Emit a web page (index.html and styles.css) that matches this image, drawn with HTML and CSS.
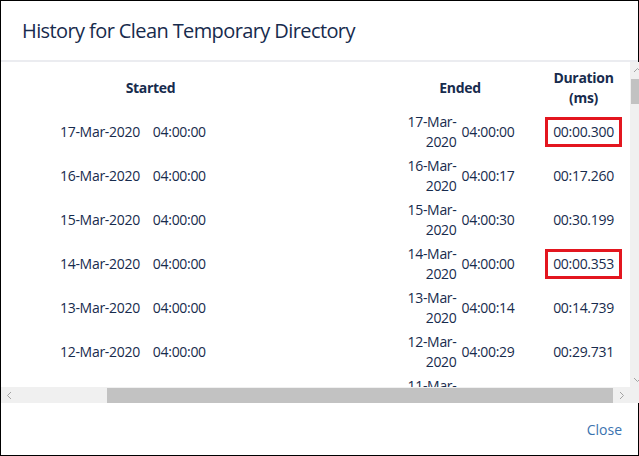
FILE: index.html
```html
<!DOCTYPE html>
<html lang="en">
<head>
  <meta charset="UTF-8" />
  <title>History for Clean Temporary Directory</title>
  <link rel="stylesheet" href="styles.css">
</head>
<body>
  <div class="dialog">
    <header class="dialog-header">
      <h2>History for Clean Temporary Directory</h2>
    </header>

    <div class="scroll-area">
      <div class="viewport">
        <div class="history">
          <div class="cell head started">Started</div>
          <div class="cell head ended">Ended</div>
          <div class="cell head duration">Duration<br>(ms)</div>

          <div class="cell started"><span>17-Mar-2020</span><span>04:00:00</span></div>
          <div class="cell ended"><span class="date">17-Mar-2020</span><span>04:00:00</span></div>
          <div class="cell duration"><span class="ms flagged">00:00.300</span></div>

          <div class="cell started"><span>16-Mar-2020</span><span>04:00:00</span></div>
          <div class="cell ended"><span class="date">16-Mar-2020</span><span>04:00:17</span></div>
          <div class="cell duration"><span class="ms">00:17.260</span></div>

          <div class="cell started"><span>15-Mar-2020</span><span>04:00:00</span></div>
          <div class="cell ended"><span class="date">15-Mar-2020</span><span>04:00:30</span></div>
          <div class="cell duration"><span class="ms">00:30.199</span></div>

          <div class="cell started"><span>14-Mar-2020</span><span>04:00:00</span></div>
          <div class="cell ended"><span class="date">14-Mar-2020</span><span>04:00:00</span></div>
          <div class="cell duration"><span class="ms flagged">00:00.353</span></div>

          <div class="cell started"><span>13-Mar-2020</span><span>04:00:00</span></div>
          <div class="cell ended"><span class="date">13-Mar-2020</span><span>04:00:14</span></div>
          <div class="cell duration"><span class="ms">00:14.739</span></div>

          <div class="cell started"><span>12-Mar-2020</span><span>04:00:00</span></div>
          <div class="cell ended"><span class="date">12-Mar-2020</span><span>04:00:29</span></div>
          <div class="cell duration"><span class="ms">00:29.731</span></div>

          <div class="cell started"><span>11-Mar-2020</span><span>04:00:00</span></div>
          <div class="cell ended"><span class="date">11-Mar-2020</span><span>04:00:21</span></div>
          <div class="cell duration"><span class="ms">00:21.402</span></div>
        </div>
      </div>

      <div class="vbar">
        <svg class="arrow" width="9" height="6" viewBox="0 0 9 6"><polyline points="1,5 4.5,1.5 8,5" /></svg>
        <div class="vthumb"></div>
        <div class="spacer"></div>
        <svg class="arrow" width="9" height="6" viewBox="0 0 9 6"><polyline points="1,1 4.5,4.5 8,1" /></svg>
      </div>

      <div class="hbar">
        <svg class="arrow" width="6" height="9" viewBox="0 0 6 9"><polyline points="5,1 1.5,4.5 5,8" /></svg>
        <div class="hthumb"></div>
        <svg class="arrow" width="6" height="9" viewBox="0 0 6 9"><polyline points="1,1 4.5,4.5 1,8" /></svg>
      </div>
      <div class="corner"></div>
    </div>

    <footer class="dialog-footer">
      <a href="#" class="close-link">Close</a>
    </footer>
  </div>
</body>
</html>
```

FILE: styles.css
```css
* { box-sizing: border-box; }
body {
  margin: 0;
  background: #fff;
  color: #172b4d;
  font-family: 'Open Sans', sans-serif;
  font-size: 14px;
  line-height: 20px;
}
.dialog {
  width: 639px;
  height: 456px;
  border: 1px solid #000;
  display: flex;
  flex-direction: column;
  background: #fff;
}
.dialog-header {
  height: 61px;
  flex: none;
  display: flex;
  align-items: center;
  padding-left: 21px;
  border-bottom: 2px solid #ebecf0;
}
.dialog-header h2 {
  margin: 0;
  font-size: 20px;
  font-weight: normal;
  line-height: 24px;
  letter-spacing: -0.6px;
}

/* scrolling table area */
.scroll-area {
  flex: none;
  display: grid;
  grid-template-columns: 1fr 16px;
  grid-template-rows: 325px 16px;
}
.viewport {
  overflow: hidden;
}
.history {
  display: grid;
  grid-template-columns: 299px 245px 77px;
  grid-template-rows: 48px;
  grid-auto-rows: 44px;
  letter-spacing: -0.3px;
}
.cell {
  display: flex;
  align-items: center;
}
.cell.head {
  font-weight: bold;
  justify-content: center;
  text-align: center;
  padding-top: 4px;
}
.cell.started { padding-left: 59px; gap: 13px; }
.cell.head.started { padding-left: 0; }
.cell.ended { padding-left: 75px; justify-content: center; gap: 5px; }
.cell.duration { justify-content: center; }
.date {
  width: 51px;
  text-align: right;
}
.ms {
  padding: 2px 5px;
  border: 3px solid transparent;
}
.ms.flagged {
  border-color: #e3161f;
}

/* fake scrollbars */
.vbar {
  background: #f0f0f0;
  display: flex;
  flex-direction: column;
  align-items: center;
  padding: 5px 0 4px;
  border-left: 1px solid #fff;
}
.vthumb {
  width: 13px;
  height: 25px;
  margin-top: 6px;
  background: #c2c2c2;
}
.spacer { flex: 1; }
.hbar {
  background: #f0f0f0;
  display: flex;
  align-items: center;
  padding: 0 4px 0 5px;
}
.hthumb {
  height: 15px;
  width: 506px;
  margin-left: 95px;
  margin-right: 6px;
  background: #c2c2c2;
}
.corner { background: #f0f0f0; }
.arrow polyline {
  fill: none;
  stroke: #a3a3a3;
  stroke-width: 1;
}

.dialog-footer {
  flex: 1;
  display: flex;
  align-items: center;
  justify-content: flex-end;
  padding-right: 16px;
  padding-top: 2px;
}
.close-link {
  color: #3b73af;
  text-decoration: none;
}
```
